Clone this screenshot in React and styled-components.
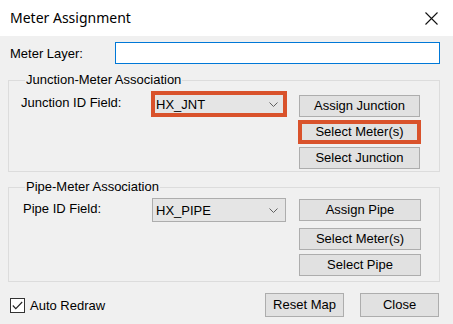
import React from "react";
import styled, { createGlobalStyle } from "styled-components";

const Global = createGlobalStyle`
  html, body { margin: 0; padding: 0; background: #f0f0f0; }
  * { box-sizing: border-box; }
`;

const Window = styled.div`
  width: 453px;
  height: 324px;
  background: #f0f0f0;
  font-family: "Liberation Sans", Arial, sans-serif;
  font-size: 13px;
  color: #000;
  overflow: hidden;
`;

const TitleBar = styled.div`
  height: 36px;
  background: #fff;
  display: flex;
  align-items: center;
  justify-content: space-between;
  padding: 0 15px 0 10px;
`;

const Title = styled.div`
  font-family: "Noto Sans", "Open Sans", sans-serif;
  font-size: 14px;
  color: #000;
  padding-bottom: 1px;
`;

const CloseIcon = styled.svg`
  width: 13px;
  height: 13px;
  display: block;
`;

const Content = styled.div`
  padding: 6px 13px 0 8px;
`;

const LayerRow = styled.div`
  display: flex;
  align-items: center;
  height: 22px;
`;

const LayerLabel = styled.label`
  width: 107px;
  padding-left: 2px;
  line-height: 15px;
`;

const TextBox = styled.div`
  width: 326px;
  height: 22px;
  background: #fff;
  border: 1px solid #0078d7;
`;

const Group = styled.fieldset`
  margin: ${(p) => p.$top}px 0 0 0;
  padding: 0 0 0 11px;
  width: 432px;
  height: ${(p) => p.$h}px;
  border: 1px solid #dcdcdc;
  min-width: 0;
`;

const Legend = styled.legend`
  padding: 0 1px;
  margin-left: 5px;
  font-size: 13px;
  line-height: 14px;
`;

const GroupBody = styled.div`
  display: flex;
  align-items: flex-start;
  padding-top: ${(p) => p.$pad}px;
`;

const FieldLabel = styled.div`
  width: 132px;
  height: 24px;
  line-height: 22px;
  padding-left: ${(p) => p.$indent}px;
`;

const Combo = styled.div`
  width: 134px;
  height: 24px;
  margin-top: ${(p) => p.$off}px;
  background: #e5e5e5;
  border: 1px solid #adadad;
  display: flex;
  align-items: center;
  justify-content: space-between;
  padding: 0 7px 0 3px;
  outline: ${(p) => (p.$marked ? "4px solid #d9522b" : "none")};
  outline-offset: -3px;
`;

const Chevron = styled.svg`
  width: 9px;
  height: 5px;
  display: block;
`;

const ButtonColumn = styled.div`
  display: flex;
  flex-direction: column;
  margin: ${(p) => p.$off}px 0 0 13px;
`;

const Button = styled.button`
  font-family: "Liberation Sans", Arial, sans-serif;
  font-size: 13px;
  color: #000;
  width: ${(p) => p.$w || 121}px;
  height: ${(p) => p.$h || 22}px;
  margin: ${(p) => p.$mt || 0}px 0 0 0;
  padding: 0;
  background: #e1e1e1;
  border: 1px solid #adadad;
  border-radius: 0;
  line-height: 18px;
  outline: ${(p) => (p.$marked ? "4px solid #d9522b" : "none")};
  outline-offset: -3px;
`;

const BottomRow = styled.div`
  display: flex;
  align-items: center;
  justify-content: space-between;
  margin-top: 11px;
`;

const CheckWrap = styled.label`
  display: flex;
  align-items: center;
  gap: 5px;
  padding-left: 2px;
`;

const CheckBox = styled.span`
  width: 15px;
  height: 15px;
  border: 1px solid #333;
  background: #fff;
  display: flex;
  align-items: center;
  justify-content: center;
`;

const Actions = styled.div`
  display: flex;
  gap: 16px;
  padding-right: 1px;
`;

const ChevronSvg = () => (
  <Chevron viewBox="0 0 9 5">
    <path d="M0.5 0.5 L4.5 4.5 L8.5 0.5" fill="none" stroke="#606060" strokeWidth="1" />
  </Chevron>
);

export default function App() {
  return (
    <Window>
      <Global />
      <TitleBar>
        <Title>Meter Assignment</Title>
        <CloseIcon viewBox="0 0 13 13">
          <path d="M0.5 0.5 L12.5 12.5 M12.5 0.5 L0.5 12.5" stroke="#111" strokeWidth="1.1" />
        </CloseIcon>
      </TitleBar>
      <Content>
        <LayerRow>
          <LayerLabel>Meter Layer:</LayerLabel>
          <TextBox />
        </LayerRow>

        <Group $top={9} $h={99}>
          <Legend>Junction-Meter Association</Legend>
          <GroupBody $pad={5}>
            <FieldLabel $indent={1}>Junction ID Field:</FieldLabel>
            <Combo $marked $off={0}>
              <span>HX_JNT</span>
              <ChevronSvg />
            </Combo>
            <ButtonColumn $off={3}>
              <Button>Assign Junction</Button>
              <Button $mt={4} $marked>Select Meter(s)</Button>
              <Button $mt={4}>Select Junction</Button>
            </ButtonColumn>
          </GroupBody>
        </Group>

        <Group $top={8} $h={102}>
          <Legend>Pipe-Meter Association</Legend>
          <GroupBody $pad={4}>
            <FieldLabel $indent={3}>Pipe ID Field:</FieldLabel>
            <Combo $off={0}>
              <span>HX_PIPE</span>
              <ChevronSvg />
            </Combo>
            <ButtonColumn $off={1}>
              <Button $w={122}>Assign Pipe</Button>
              <Button $w={122} $mt={7}>Select Meter(s)</Button>
              <Button $w={122} $mt={4}>Select Pipe</Button>
            </ButtonColumn>
          </GroupBody>
        </Group>

        <BottomRow>
          <CheckWrap>
            <CheckBox>
              <svg width="11" height="9" viewBox="0 0 11 9">
                <path d="M0.8 4.5 L3.8 7.6 L10.2 1" fill="none" stroke="#222" strokeWidth="1.1" />
              </svg>
            </CheckBox>
            Auto Redraw
          </CheckWrap>
          <Actions>
            <Button $w={79} $h={24}>Reset Map</Button>
            <Button $w={79} $h={24}>Close</Button>
          </Actions>
        </BottomRow>
      </Content>
    </Window>
  );
}
